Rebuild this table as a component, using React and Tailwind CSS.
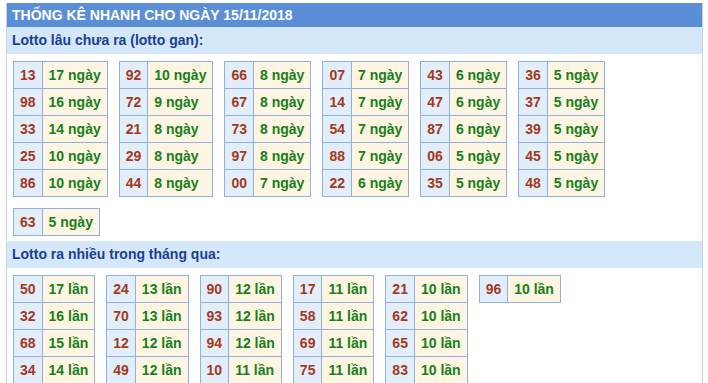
const gan = [
  [['13', '17'], ['98', '16'], ['33', '14'], ['25', '10'], ['86', '10']],
  [['92', '10'], ['72', '9'], ['21', '8'], ['29', '8'], ['44', '8']],
  [['66', '8'], ['67', '8'], ['73', '8'], ['97', '8'], ['00', '7']],
  [['07', '7'], ['14', '7'], ['54', '7'], ['88', '7'], ['22', '6']],
  [['43', '6'], ['47', '6'], ['87', '6'], ['06', '5'], ['35', '5']],
  [['36', '5'], ['37', '5'], ['39', '5'], ['45', '5'], ['48', '5']],
  [['63', '5']],
];

const nhieu = [
  [['50', '17'], ['32', '16'], ['68', '15'], ['34', '14']],
  [['24', '13'], ['70', '13'], ['12', '12'], ['49', '12']],
  [['90', '12'], ['93', '12'], ['94', '12'], ['10', '11']],
  [['17', '11'], ['58', '11'], ['69', '11'], ['75', '11']],
  [['21', '10'], ['62', '10'], ['65', '10'], ['83', '10']],
  [['96', '10']],
];

// bảng nhỏ: cột số + cột đếm, viền 1px làm bằng gap
const StatTable = ({ rows, unit }) => (
  <div className="grid grid-cols-[auto_auto] gap-px border border-[#8fb0e0] bg-[#8fb0e0] text-[14px] font-bold leading-none whitespace-nowrap">
    {rows.map(([num, count]) => (
      <div key={num} className="contents">
        <div className="flex h-[26px] items-center justify-center bg-[#e3eefb] px-[6px] text-[#a4391c]">{num}</div>
        <div className="flex h-[26px] items-center bg-[#fff5e3] px-[6px] text-[#16801a]">{`${count} ${unit}`}</div>
      </div>
    ))}
  </div>
);

const Section = ({ title, tables, unit }) => (
  <>
    <div className="flex h-[27px] items-center bg-[#d5e7fa] px-[5px] text-[14px] font-bold text-[#1b3f92]">
      {title}
    </div>
    <div className="flex flex-wrap items-start gap-x-[11px] gap-y-[11px] px-[6px] pt-[7px] pb-[5px]">
      {tables.map((rows, i) => (
        <StatTable key={i} rows={rows} unit={unit} />
      ))}
    </div>
  </>
);

export default function App() {
  return (
    <div className="h-[383px] w-[708px] overflow-hidden bg-white pt-[3px] pl-[6px]" style={{ fontFamily: '"Liberation Sans", Arial, sans-serif' }}>
      <div className="w-[697px] border-x border-[#c5d3e6]">
        <div className="flex h-[24px] items-center bg-[#5a8fd7] px-[5px] text-[14px] font-bold text-white">
          THỐNG KÊ NHANH CHO NGÀY 15/11/2018
        </div>
        <Section title="Lotto lâu chưa ra (lotto gan):" tables={gan} unit="ngày" />
        <Section title="Lotto ra nhiều trong tháng qua:" tables={nhieu} unit="lần" />
      </div>
    </div>
  );
}
